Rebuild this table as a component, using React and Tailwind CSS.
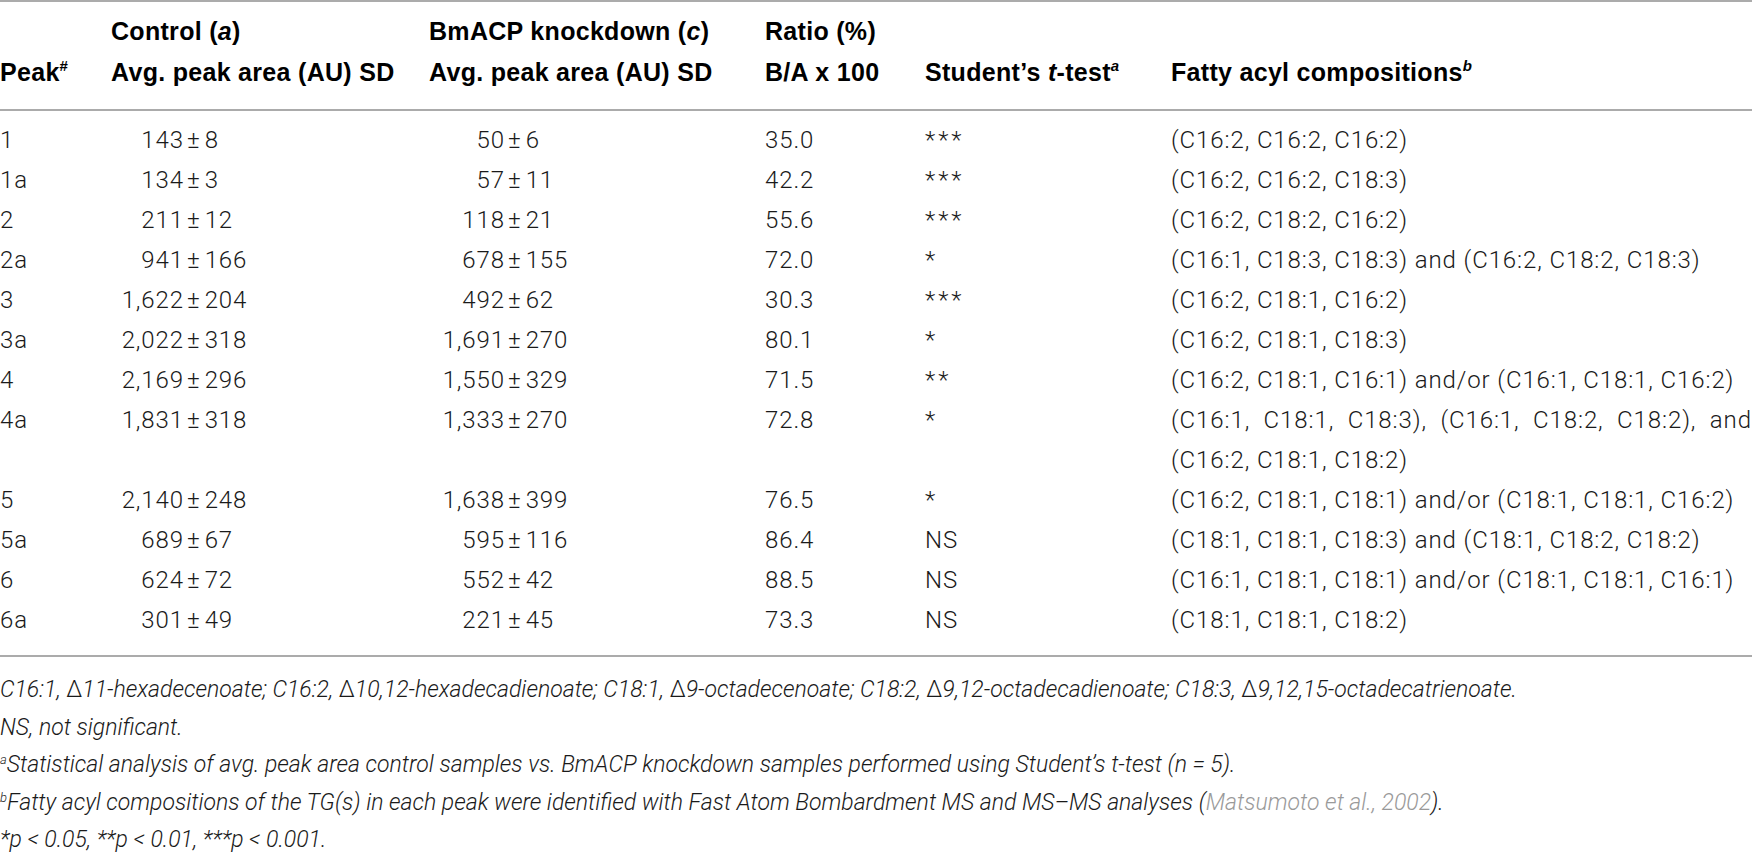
import React from 'react';

const cols = "grid grid-cols-[111px_318px_336px_160px_246px_1fr]";

const rows = [
  ["1", "143", "8", "50", "6", "35.0", "***", "(C16:2, C16:2, C16:2)"],
  ["1a", "134", "3", "57", "11", "42.2", "***", "(C16:2, C16:2, C18:3)"],
  ["2", "211", "12", "118", "21", "55.6", "***", "(C16:2, C18:2, C16:2)"],
  ["2a", "941", "166", "678", "155", "72.0", "*", "(C16:1, C18:3, C18:3) and (C16:2, C18:2, C18:3)"],
  ["3", "1,622", "204", "492", "62", "30.3", "***", "(C16:2, C18:1, C16:2)"],
  ["3a", "2,022", "318", "1,691", "270", "80.1", "*", "(C16:2, C18:1, C18:3)"],
  ["4", "2,169", "296", "1,550", "329", "71.5", "**", "(C16:2, C18:1, C16:1) and/or (C16:1, C18:1, C16:2)"],
  ["4a", "1,831", "318", "1,333", "270", "72.8", "*", null],
  ["5", "2,140", "248", "1,638", "399", "76.5", "*", "(C16:2, C18:1, C18:1) and/or (C18:1, C18:1, C16:2)"],
  ["5a", "689", "67", "595", "116", "86.4", "NS", "(C18:1, C18:1, C18:3) and (C18:1, C18:2, C18:2)"],
  ["6", "624", "72", "552", "42", "88.5", "NS", "(C16:1, C18:1, C18:1) and/or (C18:1, C18:1, C16:1)"],
  ["6a", "301", "49", "221", "45", "73.3", "NS", "(C18:1, C18:1, C18:2)"],
];

function PlusMinus({ left, right, lw }) {
  return (
    <div className="flex items-center">
      <span className={`${lw} text-right`}>{left}</span>
      <span className="ml-[3px] mr-[4px]">±</span>
      <span>{right}</span>
    </div>
  );
}

function Fatty({ text }) {
  if (text) return <div className="h-10 flex items-center whitespace-nowrap">{text}</div>;
  const parts = ["(C16:1,", "C18:1,", "C18:3),", "(C16:1,", "C18:2,", "C18:2),", "and"];
  return (
    <div>
      <div className="h-10 flex items-center justify-between">
        {parts.map((p, i) => (
          <span key={i}>{p}</span>
        ))}
      </div>
      <div className="h-10 flex items-center">(C16:2, C18:1, C18:2)</div>
    </div>
  );
}

export default function App() {
  return (
    <div className="w-[1752px] min-h-[854px] bg-white text-[#1a1a1a]">
      <div className="border-t-2 border-[#ababab]" />

      {/* header */}
      <div className={`${cols} pt-[9px] pb-[16px] font-['Liberation_Sans',Arial,sans-serif] font-bold text-[25px] tracking-[0.3px] text-black`}>
        <div className="flex flex-col">
          <div className="h-[41px]" />
          <div className="h-[41px] flex items-center">
            Peak<sup className="text-[15px] -top-[7px]">#</sup>
          </div>
        </div>
        <div className="flex flex-col">
          <div className="h-[41px] flex items-center">
            Control (<i>a</i>)
          </div>
          <div className="h-[41px] flex items-center">Avg. peak area (AU) SD</div>
        </div>
        <div className="flex flex-col">
          <div className="h-[41px] flex items-center">
            BmACP knockdown (<i>c</i>)
          </div>
          <div className="h-[41px] flex items-center">Avg. peak area (AU) SD</div>
        </div>
        <div className="flex flex-col">
          <div className="h-[41px] flex items-center">Ratio (%)</div>
          <div className="h-[41px] flex items-center">B/A x 100</div>
        </div>
        <div className="flex flex-col">
          <div className="h-[41px]" />
          <div className="h-[41px] flex items-center">
            Student’s&nbsp;<i>t</i>-test<sup className="text-[15px] -top-[7px] italic">a</sup>
          </div>
        </div>
        <div className="flex flex-col">
          <div className="h-[41px]" />
          <div className="h-[41px] flex items-center">
            Fatty acyl compositions<sup className="text-[15px] -top-[7px] italic">b</sup>
          </div>
        </div>
      </div>

      <div className="border-t-2 border-[#ababab]" />

      {/* body */}
      <div className="pt-[9px] pb-[15px] font-['Roboto',sans-serif] font-light text-[24px] tracking-[0.9px]">
        {rows.map((r) => (
          <div key={r[0]} className={cols}>
            <div className="h-10 flex items-center">{r[0]}</div>
            <div className="h-10 flex items-center">
              <PlusMinus left={r[1]} right={r[2]} lw="w-[73px]" />
            </div>
            <div className="h-10 flex items-center">
              <PlusMinus left={r[3]} right={r[4]} lw="w-[76px]" />
            </div>
            <div className="h-10 flex items-center">{r[5]}</div>
            <div className="h-10 flex items-center">
              {r[6] === "NS" ? "NS" : <span className="tracking-[3px]">{r[6]}</span>}
            </div>
            <Fatty text={r[7]} />
          </div>
        ))}
      </div>

      <div className="border-t-2 border-[#ababab]" />

      {/* footnotes */}
      <div className="pt-[14px] font-['Roboto',sans-serif] font-light italic text-[23px] leading-[37.5px]">
        <p>
          C16:1, <span className="not-italic">Δ</span>11-hexadecenoate; C16:2, <span className="not-italic">Δ</span>10,12-hexadecadienoate; C18:1,{" "}
          <span className="not-italic">Δ</span>9-octadecenoate; C18:2, <span className="not-italic">Δ</span>9,12-octadecadienoate; C18:3,{" "}
          <span className="not-italic">Δ</span>9,12,15-octadecatrienoate.
        </p>
        <p>NS, not significant.</p>
        <p>
          <sup className="text-[13px] -top-[8px]">a</sup>Statistical analysis of avg. peak area control samples vs. BmACP knockdown samples performed
          using Student’s t-test (<span>n</span> = 5).
        </p>
        <p>
          <sup className="text-[13px] -top-[8px]">b</sup>Fatty acyl compositions of the TG(s) in each peak were identified with Fast Atom Bombardment MS and
          MS–MS analyses (<span className="text-[#9a9a9a]">Matsumoto et al., 2002</span>).
        </p>
        <p>*p &lt; 0.05, **p &lt; 0.01, ***p &lt; 0.001.</p>
      </div>
    </div>
  );
}
